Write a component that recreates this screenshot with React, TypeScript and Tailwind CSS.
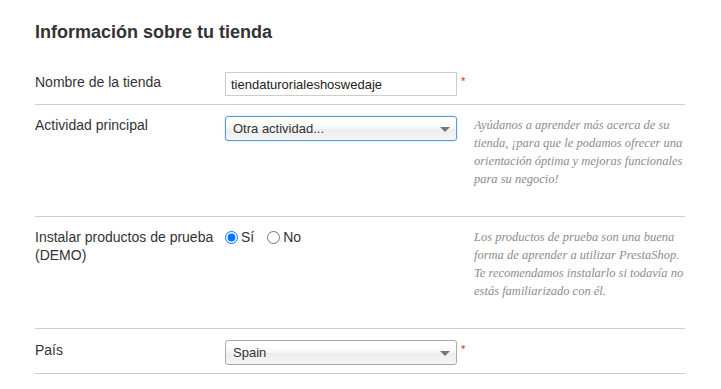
import React from 'react';

const help1 = [
  'Ayúdanos a aprender más acerca de su',
  'tienda, ¡para que le podamos ofrecer una',
  'orientación óptima y mejoras funcionales',
  'para su negocio!',
];

const help2 = [
  'Los productos de prueba son una buena',
  'forma de aprender a utilizar PrestaShop.',
  'Te recomendamos instalarlo si todavía no',
  'estás familiarizado con él.',
];

const Required = () => (
  <span className="ml-[4px] text-[11px] leading-[18px] text-[#e41b1b]">*</span>
);

const Help = ({ lines }: { lines: string[] }) => (
  <p className="w-[211px] text-[12.5px] leading-[18px] italic text-[#8c8c8c] [font-family:'Liberation_Serif',serif]">
    {lines.map((l) => (
      <span key={l} className="block whitespace-nowrap">
        {l}
      </span>
    ))}
  </p>
);

const FakeSelect = ({ value, focused }: { value: string; focused?: boolean }) => (
  <div
    className={
      focused
        ? 'flex h-[25px] w-[232px] items-center justify-between rounded-[3px] border border-[#5b9dd9] bg-[linear-gradient(#fff_20%,#f6f6f6_50%,#eee_52%,#f4f4f4_100%)] px-[7px] shadow-[0_0_2px_rgba(91,157,217,0.6)]'
        : 'flex h-[25px] w-[232px] items-center justify-between rounded-[3px] border border-[#aaa] bg-[linear-gradient(#fff_20%,#f6f6f6_50%,#eee_52%,#f4f4f4_100%)] px-[7px]'
    }
  >
    <span className="text-[13px] text-[#333]">{value}</span>
    <span className="mt-[2px] mr-[-1px] h-0 w-0 border-x-[5px] border-t-[5px] border-x-transparent border-t-[#777]" />
  </div>
);

export default function App() {
  return (
    <div className="min-h-screen bg-white pl-[35px] pt-[21px] text-[#333] [font-family:'Liberation_Sans',Arial,sans-serif]">
      <h2 className="mb-[18px] text-[18px] font-bold leading-[22px]">Información sobre tu tienda</h2>

      <div className="w-[650px]">
        {/* nombre */}
        <div className="flex border-b border-[#ccc] pt-[11px] pb-[8px]">
          <label className="w-[190px] pt-[1px] text-[14px] leading-[18px]">Nombre de la tienda</label>
          <div className="flex items-start">
            <input
              readOnly
              value="tiendaturorialeshoswedaje"
              className="h-[24px] w-[232px] border border-[#ccc] px-[5px] text-[13px] text-[#222] outline-none"
            />
            <Required />
          </div>
        </div>

        {/* actividad */}
        <div className="flex border-b border-[#ccc] pt-[11px] pb-[28px]">
          <label className="w-[190px] text-[14px] leading-[18px]">Actividad principal</label>
          <div className="w-[249px]">
            <FakeSelect value="Otra actividad..." focused />
          </div>
          <Help lines={help1} />
        </div>

        {/* demo */}
        <div className="flex border-b border-[#ccc] pt-[11px] pb-[28px]">
          <label className="w-[190px] text-[14px] leading-[18px]">
            Instalar productos de prueba
            <br />
            (DEMO)
          </label>
          <div className="flex w-[249px] items-start gap-[5px] text-[14px] leading-[18px]">
            <label className="flex items-start">
              <input type="radio" name="demo" defaultChecked className="m-0 mt-[3px] h-[13px] w-[13px] accent-[#0075ff]" />
              <span className="ml-[3px]">Sí</span>
            </label>
            <label className="ml-[8px] flex items-start">
              <input type="radio" name="demo" className="m-0 mt-[3px] h-[13px] w-[13px]" />
              <span className="ml-[3px]">No</span>
            </label>
          </div>
          <Help lines={help2} />
        </div>

        {/* pais */}
        <div className="flex border-b border-[#ccc] pt-[11px] pb-[8px]">
          <label className="w-[190px] pt-[1px] text-[14px] leading-[18px]">País</label>
          <div className="flex items-start">
            <FakeSelect value="Spain" />
            <Required />
          </div>
        </div>
      </div>
    </div>
  );
}
